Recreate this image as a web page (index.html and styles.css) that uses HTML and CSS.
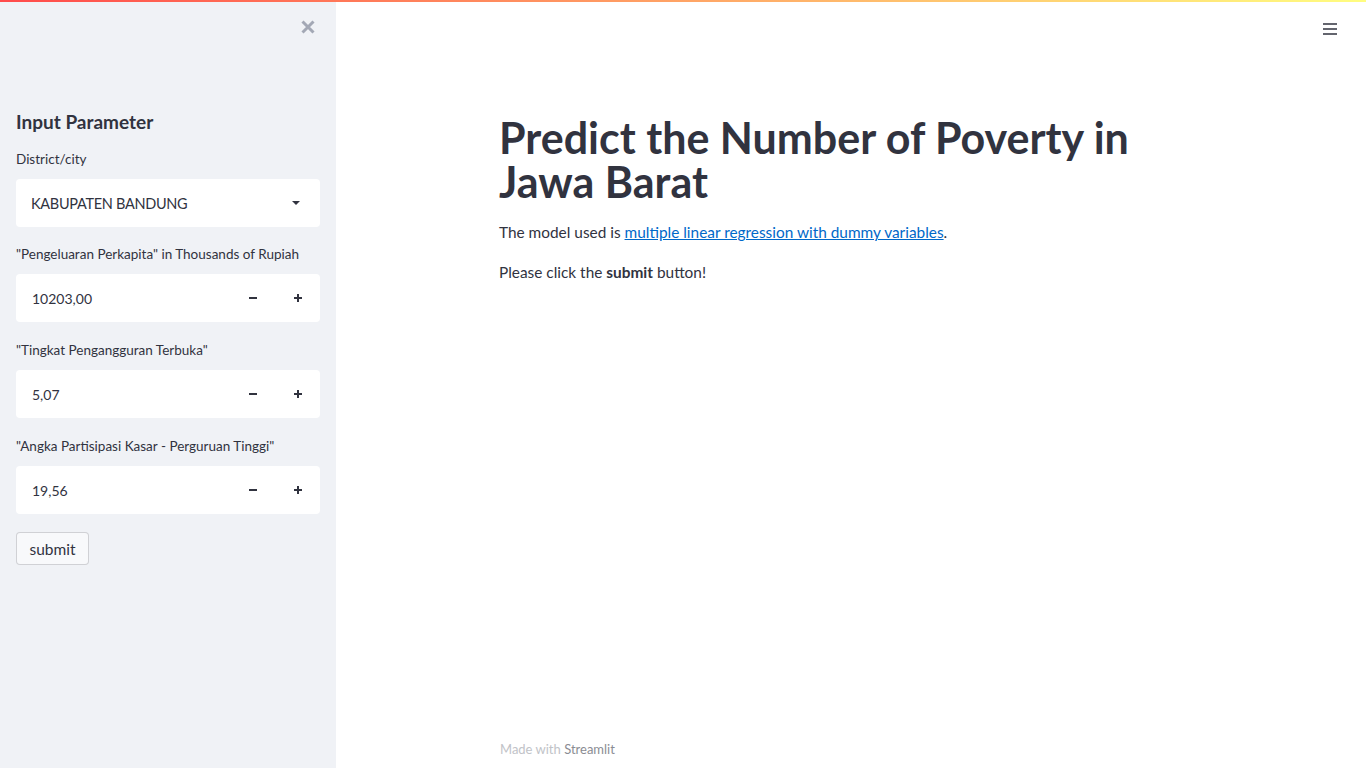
FILE: index.html
```html
<!DOCTYPE html>
<html>
<head>
<meta charset="utf-8">
<link rel="stylesheet" href="styles.css">
</head>
<body>
<div class="topbar"></div>
<div class="app">
  <aside class="sidebar">
    <div class="close">
      <svg width="16" height="16" viewBox="0 0 16 16"><path d="M2.5 2.5 L13.5 13.5 M13.5 2.5 L2.5 13.5" stroke="#a3a8b5" stroke-width="3" stroke-linecap="butt"/></svg>
    </div>
    <h3 class="side-title">Input Parameter</h3>
    <div class="field first">
      <label class="label">District/city</label>
      <div class="select">
        <span class="sel-val">KABUPATEN BANDUNG</span>
        <svg class="caret" width="10" height="6" viewBox="0 0 10 6"><path d="M1 1 L9 1 L5 5 Z" fill="#31333f"/></svg>
      </div>
    </div>
    <div class="field second">
      <label class="label">"Pengeluaran Perkapita" in Thousands of Rupiah</label>
      <div class="number">
        <span class="val">10203,00</span>
        <span class="step"><svg width="8" height="8" viewBox="0 0 8 8"><path d="M0 4h8" stroke="#31333f" stroke-width="2"/></svg></span>
        <span class="step"><svg width="8" height="8" viewBox="0 0 8 8"><path d="M0 4h8M4 0v8" stroke="#31333f" stroke-width="2"/></svg></span>
      </div>
    </div>
    <div class="field">
      <label class="label">"Tingkat Pengangguran Terbuka"</label>
      <div class="number">
        <span class="val">5,07</span>
        <span class="step"><svg width="8" height="8" viewBox="0 0 8 8"><path d="M0 4h8" stroke="#31333f" stroke-width="2"/></svg></span>
        <span class="step"><svg width="8" height="8" viewBox="0 0 8 8"><path d="M0 4h8M4 0v8" stroke="#31333f" stroke-width="2"/></svg></span>
      </div>
    </div>
    <div class="field">
      <label class="label">"Angka Partisipasi Kasar - Perguruan Tinggi"</label>
      <div class="number">
        <span class="val">19,56</span>
        <span class="step"><svg width="8" height="8" viewBox="0 0 8 8"><path d="M0 4h8" stroke="#31333f" stroke-width="2"/></svg></span>
        <span class="step"><svg width="8" height="8" viewBox="0 0 8 8"><path d="M0 4h8M4 0v8" stroke="#31333f" stroke-width="2"/></svg></span>
      </div>
    </div>
    <div class="field btn-field">
      <button class="btn">submit</button>
    </div>
  </aside>
  <main class="main">
    <div class="menu">
      <svg width="16" height="14" viewBox="0 0 16 14"><path d="M1 2h14M1 7h14M1 12h14" stroke="#31333f" stroke-width="1.6"/></svg>
    </div>
    <div class="block">
      <h1 class="title">Predict the Number of Poverty in Jawa Barat</h1>
      <p class="para">The model used is <a href="#" class="link">multiple linear regression with dummy variables</a>.</p>
      <p class="para">Please click the <b>submit</b> button!</p>
    </div>
    <footer class="footer">Made with <span class="brand">Streamlit</span></footer>
  </main>
</div>
</body>
</html>
```
FILE: styles.css
```css
* { box-sizing: border-box; }
html, body { margin: 0; padding: 0; height: 100%; }
body {
  font-family: Lato, "Liberation Sans", sans-serif;
  color: #31333f;
  background: #fff;
  overflow: hidden;
}
.topbar {
  position: fixed; top: 0; left: 0; right: 0; height: 2px; z-index: 5;
  background: linear-gradient(90deg, #ff4b4b, #fffd80);
}
.app { display: flex; height: 768px; }
.sidebar {
  width: 336px; flex: none; background: #f0f2f6;
  padding: 0 16px; position: relative;
}
.close {
  position: absolute; top: 19px; left: 300px; width: 16px; height: 16px;
}
.close svg { display: block; }
.side-title {
  margin: 110px 0 0; font-size: 19px; font-weight: 700; line-height: 24px; height: 24px;
}
.field { margin-top: 16px; }
.field.first { margin-top: 14px; }
.field.second { margin-top: 15px; }
.label {
  display: block; font-size: 13.5px; line-height: 20px; padding-top: 2px; margin-bottom: 10px;
}
.field.first .label { padding-top: 1px; }
.select {
  height: 48px; background: #fff; border-radius: 4px;
  display: flex; align-items: center; justify-content: space-between;
  padding: 0 19px 0 15px;
}
.sel-val { font-size: 14.5px; letter-spacing: -0.3px; }
.number {
  height: 48px; background: #fff; border-radius: 4px;
  display: flex; align-items: center;
}
.val { flex: 1; padding-left: 16px; font-size: 14px; }
.step {
  width: 45px; height: 48px; display: flex; align-items: center; justify-content: center;
}
.step svg { display: block; }
.field.btn-field { margin-top: 18px; }
.btn {
  display: block;
  font-family: inherit; font-size: 15.5px; color: #31333f;
  background: #f8f9fb; border: 1px solid rgba(49,51,63,0.2); border-radius: 4px;
  height: 33px; width: 73px; padding: 0; margin: 0;
}
.main { flex: 1; position: relative; }
.menu { position: absolute; top: 22px; left: 986px; }
.menu svg { display: block; }
.block { width: 736px; margin: 0 auto; padding: 116px 16px 0; }
.title {
  margin: 0; font-size: 43px; font-weight: 700; line-height: 44px; letter-spacing: 0;
}
.para { margin: 18px 0 0; font-size: 15.4px; line-height: 22px; }
.title + .para { margin-top: 17px; }
.link { color: #0068c9; }
.footer {
  position: absolute; bottom: 11px; left: 164px; font-size: 13px; color: #c1c3c8;
}
.brand { color: #8a8c93; }
```
